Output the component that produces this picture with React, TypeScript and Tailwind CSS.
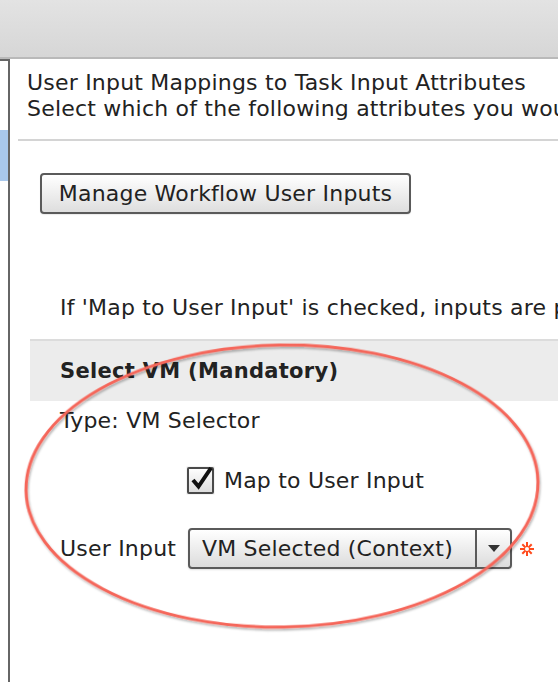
import React from 'react';

const font = { fontFamily: '"DejaVu Sans", Verdana, sans-serif' };

const CheckBox: React.FC = () => (
    <svg width="29" height="29" viewBox="0 0 29 29" className="shrink-0">
        <defs>
            <linearGradient id="cb" x1="0" y1="0" x2="0" y2="1">
                <stop offset="0" stopColor="#ffffff" />
                <stop offset="1" stopColor="#dcdcdc" />
            </linearGradient>
        </defs>
        <rect x="0.5" y="0.5" width="28" height="28" fill="#e9e9e9" />
        <rect x="2" y="2" width="25" height="25" rx="1" fill="url(#cb)" stroke="#4a4a4a" strokeWidth="2" />
        <path d="M7 14 L12.5 20.5 L25 2" fill="none" stroke="#111" strokeWidth="4" strokeLinejoin="miter" />
    </svg>
);

const Asterisk: React.FC = () => (
    <svg width="14" height="14" viewBox="0 0 14 14" className="ml-[8px]">
        <g stroke="#ff4a1c" strokeWidth="2" strokeLinecap="square">
            <line x1="7" y1="1" x2="7" y2="13" />
            <line x1="1" y1="7" x2="13" y2="7" />
            <line x1="3" y1="3" x2="11" y2="11" />
            <line x1="11" y1="3" x2="3" y2="11" />
        </g>
        <circle cx="7" cy="7" r="2" fill="#fff" />
    </svg>
);

export default function App() {
    return (
        <div className="relative w-[558px] h-[682px] overflow-hidden bg-white text-[#222] text-[22px] leading-[26px] tracking-[0.2px]" style={font}>
            {/* top toolbar */}
            <div className="h-[59px] bg-gradient-to-b from-[#e3e3e3] to-[#d6d6d6] border-b-2 border-[#b9b9b9]"></div>

            <div className="flex h-[623px]">
                {/* left nav strip */}
                <div className="w-[10px] shrink-0 border-t-2 border-r-2 border-[#666] bg-white pt-[69px]">
                    <div className="h-[51px] bg-[#a9c8ec]"></div>
                </div>

                <div className="flex-1 min-w-0 pl-[8px]">
                    <div className="pl-[9px] pt-[11px] whitespace-nowrap overflow-hidden">
                        <div>User Input Mappings to Task Input Attributes</div>
                        <div>Select which of the following attributes you wou</div>
                    </div>
                    <div className="mt-[17px] h-[2px] bg-[#d4d4d4]"></div>

                    <div className="pl-[22px] pt-[32px]">
                        <button className="h-[41px] w-[371px] rounded-[4px] border-2 border-[#5a5a5a] bg-gradient-to-b from-white to-[#dedede] text-[#222] shadow-[0_1px_1px_rgba(0,0,0,0.08)]">
                            Manage Workflow User Inputs
                        </button>
                    </div>

                    <div className="pl-[42px] pt-[81px] whitespace-nowrap overflow-hidden">
                        If 'Map to User Input' is checked, inputs are p
                    </div>

                    <div className="ml-[12px] mt-[18px] border-t-2 border-[#dcdcdc] bg-[#ececec] h-[62px] flex items-center pl-[30px]">
                        <span className="text-[21px] font-bold tracking-[0.3px] whitespace-nowrap">Select VM (Mandatory)</span>
                    </div>

                    <div className="pl-[42px] pt-[7px]">Type: VM Selector</div>

                    <div className="flex items-center pl-[168px] pt-[32px] gap-[9px]">
                        <CheckBox />
                        <span>Map to User Input</span>
                    </div>

                    <div className="flex items-center pl-[42px] pt-[33px]">
                        <span className="w-[128px] whitespace-nowrap">User Input</span>
                        <div className="flex h-[41px] w-[324px] rounded-[4px] border-2 border-[#5a5a5a] bg-gradient-to-b from-white to-[#dcdcdc] shadow-[0_1px_2px_rgba(0,0,0,0.12)]">
                            <div className="flex-1 flex items-center pl-[12px] whitespace-nowrap">VM Selected (Context)</div>
                            <div className="w-[35px] border-l-2 border-[#5a5a5a] flex items-center justify-center">
                                <svg width="12" height="7" viewBox="0 0 12 7"><path d="M0 0 H12 L6 7 Z" fill="#333" /></svg>
                            </div>
                        </div>
                        <Asterisk />
                    </div>
                </div>
            </div>

            {/* red annotation ring */}
            <svg className="absolute left-0 top-0 pointer-events-none" width="558" height="682">
                <defs>
                    <filter id="sh" x="-10%" y="-10%" width="120%" height="120%">
                        <feDropShadow dx="1" dy="2" stdDeviation="1.2" floodColor="#000" floodOpacity="0.3" />
                    </filter>
                </defs>
                <ellipse cx="282" cy="486" rx="256" ry="141" fill="none" stroke="#f5665a" strokeWidth="3" filter="url(#sh)" transform="rotate(-1 282 486)" />
            </svg>
        </div>
    );
}
